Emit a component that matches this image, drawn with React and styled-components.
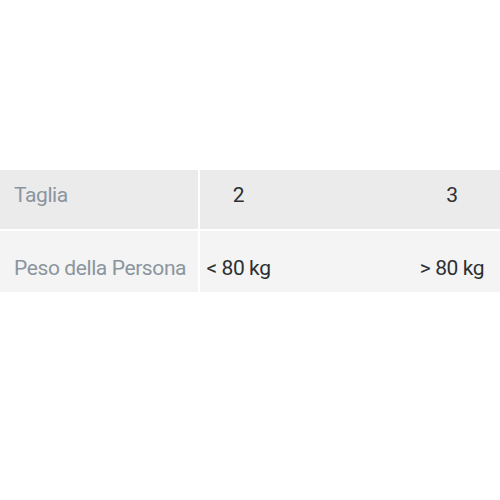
import React from 'react'
import styled, { createGlobalStyle } from 'styled-components'

const Global = createGlobalStyle`
    body {
        margin: 0;
        background: #ffffff;
        font-family: Roboto, "Liberation Sans", sans-serif;
    }
`

const Page = styled.div`
    width: 500px;
    height: 500px;
    padding-top: 170px;
    box-sizing: border-box;
`

const Table = styled.div`
    display: grid;
    grid-template-columns: 198px 77px 1fr 94px;
    row-gap: 2px;
    column-gap: 2px;
    background: #ffffff;
`

const Row = styled.div`
    display: contents;
`

const Cell = styled.div`
    background: ${p => p.$shade};
    height: ${p => p.$h}px;
    display: flex;
    align-items: center;
    justify-content: ${p => p.$label ? 'flex-start' : 'center'};
    padding-left: ${p => p.$label ? '14px' : '0'};
    padding-top: ${p => p.$shift > 0 ? p.$shift * 2 : 0}px;
    padding-bottom: ${p => p.$shift < 0 ? -p.$shift * 2 : 0}px;
    margin-left: ${p => p.$last ? '-2px' : '0'};
    box-sizing: border-box;
    font-size: 21px;
    letter-spacing: -0.4px;
    color: ${p => p.$label ? '#8a959e' : '#2c3033'};
    white-space: nowrap;
`

const Filler = styled.div`
    background: ${p => p.$shade};
    height: ${p => p.$h}px;
    margin-left: -2px;
`

const rows = [
    { label: 'Taglia', a: '2', b: '3', shade: '#ebebeb', h: 59, shift: -5 },
    { label: 'Peso della Persona', a: '< 80 kg', b: '> 80 kg', shade: '#f4f4f4', h: 61, shift: 6 },
]

export default function App() {
    return (
        <Page>
            <Global />
            <Table>
                {rows.map(r => (
                    <Row key={r.label}>
                        <Cell $label $shade={r.shade} $h={r.h} $shift={r.shift}>{r.label}</Cell>
                        <Cell $shade={r.shade} $h={r.h} $shift={r.shift}>{r.a}</Cell>
                        <Filler $shade={r.shade} $h={r.h} />
                        <Cell $last $shade={r.shade} $h={r.h} $shift={r.shift}>{r.b}</Cell>
                    </Row>
                ))}
            </Table>
        </Page>
    )
}
